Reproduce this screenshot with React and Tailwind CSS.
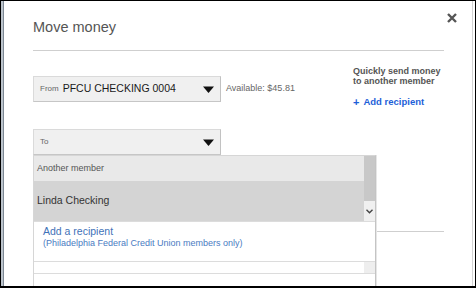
import React from 'react'

const Caret = () => (
  <svg width="11" height="7" viewBox="0 0 11 7">
    <path d="M0 0.5h11L5.5 7z" fill="#111" />
  </svg>
)

const SelectBox = ({ label, value }) => (
  <div className="flex h-[26px] w-[188px] shrink-0 items-center border border-[#dadada] border-r-[#c2c2c2] border-b-[#c6c6c6] bg-[#f0f0f0] pl-[6px] pr-[6px]">
    <span className="text-[8px] text-[#666]">{label}</span>
    {value && <span className="ml-[4px] text-[10.5px] text-[#1a1a1a]">{value}</span>}
    <span className="ml-auto flex"><Caret /></span>
  </div>
)

export default function App() {
  return (
    <div className="flex h-[288px] w-[476px] overflow-hidden border-x border-t border-b-2 border-black bg-white font-['Liberation_Sans',Arial,sans-serif]">
      <div className="w-[3px] shrink-0 border-r border-[#7d8894] bg-[#bcc4cc]" />
      <div className="relative mr-[2px] flex-1 border-r border-[#d4d4d4] pl-[29px] pr-[28px] pt-[18px]">
        {/* close */}
        <svg className="absolute right-[15px] top-[12px]" width="10" height="10" viewBox="0 0 10 10">
          <path d="M1 1L9 9M9 1L1 9" stroke="#555" strokeWidth="2.4" />
        </svg>

        <h1 className="text-[14.5px] leading-[17px] text-[#555]">Move money</h1>
        <div className="mt-[14px] h-px bg-[#cfcfcf]" />

        <div className="flex items-start pt-[15px]">
          <div className="mt-[10px] flex flex-col">
            <div className="flex items-center">
              <SelectBox label="From" value="PFCU CHECKING 0004" />
              <span className="ml-[5px] text-[9px] text-[#666]">Available: $45.81</span>
            </div>

            <div className="relative mt-[27px] w-[188px]">
              <SelectBox label="To" />
              {/* open dropdown */}
              <div className="absolute left-0 top-full z-10 h-[140px] w-[343px] border border-[#d6d6d6] border-r-[#c4c4c4] bg-white shadow-[1px_0_0_#e6e6e6]">
                <div className="flex border-b border-[#dcdcdc]">
                  <div className="flex-1">
                    <div className="flex h-[25px] items-center bg-[#e9e9e9] pl-[3px] text-[9px] text-[#555]">Another member</div>
                    <div className="flex h-[40px] items-center bg-[#d4d4d4] pl-[3px] text-[10.5px] text-[#333]">Linda Checking</div>
                  </div>
                  <div className="flex w-[11px] flex-col">
                    <div className="h-[45px] bg-[#c8c8c8]" />
                    <div className="flex flex-1 items-center justify-center bg-[#f0f0f0]">
                      <svg width="7" height="5" viewBox="0 0 7 5">
                        <path d="M0.5 0.8L3.5 3.8L6.5 0.8" fill="none" stroke="#444" strokeWidth="1.4" />
                      </svg>
                    </div>
                  </div>
                </div>
                <div className="h-[40px] border-b border-[#dcdcdc] pl-[9px] pt-[3px]">
                  <div className="text-[10.5px] leading-[13px] text-[#3f72b8]">Add a recipient</div>
                  <div className="text-[9px] leading-[11px] text-[#4a7bc2]">(Philadelphia Federal Credit Union members only)</div>
                </div>
                <div className="flex h-[12px] border-b border-[#dcdcdc]">
                  <div className="flex-1" />
                  <div className="w-[11px] bg-[#eeeeee]" />
                </div>
              </div>
            </div>
          </div>

          <div className="ml-auto w-[91px]">
            <p className="text-[9px] font-bold leading-[10px] text-[#555]">Quickly send money to another member</p>
            <a className="mt-[11px] flex items-center text-[9.5px] font-bold leading-[10px] text-[#1d5fd8]">
              <span className="mr-[4px] text-[11px]">+</span>Add recipient
            </a>
          </div>
        </div>

        <div className="mt-[76px] h-px bg-[#cfcfcf]" />
      </div>
    </div>
  )
}
